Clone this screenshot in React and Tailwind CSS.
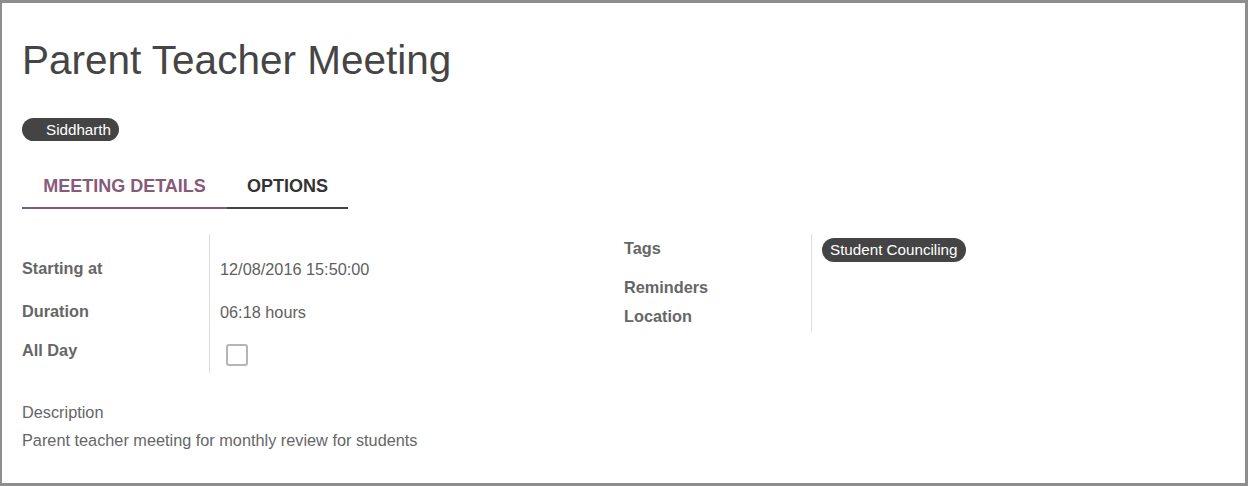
export default function App() {
  return (
    <div
      className="w-[1248px] h-[486px] bg-white border-t-[3px] border-l-2 border-r-[3px] border-b-[3px] border-[#8e8e8e] text-[#666]"
      style={{ fontFamily: '"Liberation Sans", Arial, sans-serif' }}
    >
      <div className="pl-5 pr-5">
        <h1 className="mt-[33px] text-[40.5px] leading-[48px] text-[#454545]">Parent Teacher Meeting</h1>

        <div className="mt-[34px] flex">
          <span className="h-[23px] rounded-full bg-[#444] pl-6 pr-2 text-[15.2px] leading-[23px] text-white">
            Siddharth
          </span>
        </div>

        <div className="mt-[31px] flex">
          <div className="w-[205px] border-b-2 border-[#875a7b] pb-[9px] pt-[2px] text-center text-[18px] font-bold leading-6 text-[#875a7b]">
            MEETING DETAILS
          </div>
          <div className="w-[121px] border-b-2 border-[#444] pb-[9px] pt-[2px] text-center text-[18px] font-bold leading-6 text-[#333]">
            OPTIONS
          </div>
        </div>

        <div className="mt-[25px] flex items-start leading-[20px]">
          <div className="flex w-[602px]">
            <div className="w-[188px] border-r border-[#ddd] pt-[24px] text-[16.3px] font-bold">
              <div className="h-[43px]">Starting at</div>
              <div className="h-[39px]">Duration</div>
              <div className="h-[33px]">All Day</div>
            </div>
            <div className="pl-[10px] pt-[25px] text-[16.3px] text-[#5f5f5f]">
              <div className="h-[43px]">12/08/2016 15:50:00</div>
              <div className="h-[42px]">06:18 hours</div>
              <div className="pl-[6px]">
                <div className="h-[22px] w-[22px] rounded-[3px] border-2 border-[#b5b5b5]" />
              </div>
            </div>
          </div>
          <div className="flex">
            <div className="w-[188px] border-r border-[#ddd] pb-[6px] pt-[4px] text-[16.3px] font-bold">
              <div className="h-[39px]">Tags</div>
              <div className="h-[29px]">Reminders</div>
              <div className="h-[20px]">Location</div>
            </div>
            <div className="pl-[10px] pt-[4px]">
              <span className="inline-block h-[24px] rounded-full bg-[#444] px-2 text-[15.2px] leading-[24px] text-white">
                Student Counciling
              </span>
            </div>
          </div>
        </div>

        <div className="mt-[29px] text-[16.3px] leading-[20px]">Description</div>
        <div className="mt-2 text-[16.3px] leading-[20px]">Parent teacher meeting for monthly review for students</div>
      </div>
    </div>
  );
}
